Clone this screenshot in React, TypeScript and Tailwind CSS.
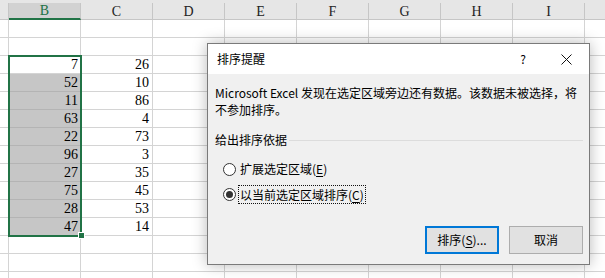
import React from "react";

const cols = ["B", "C", "D", "E", "F", "G", "H", "I"];

const colB = [null, null, 7, 52, 11, 63, 22, 96, 27, 75, 28, 47, null, null, null];
const colC = [null, null, 26, 10, 86, 4, 73, 3, 35, 45, 53, 14, null, null, null];

const cellFont = { fontFamily: '"Liberation Serif", serif' };
const uiFont = '"Noto Sans CJK SC", "Noto Sans", sans-serif';

function HeaderRow() {
  return (
    <div className="flex h-[20px] bg-[#e6e6e6]">
      <div className="w-[9px] shrink-0 border-r border-b border-[#c6c6c6] mt-[3px]" />
      {cols.map((c) => (
        <div
          key={c}
          className={
            c === "B"
              ? "w-[72px] shrink-0 mt-[3px] flex items-center justify-center bg-[#d2d2d2] border-r border-[#c6c6c6] border-b-2 border-b-[#217346] text-[#217346] text-[14px]"
              : "w-[72px] shrink-0 mt-[3px] flex items-center justify-center border-r border-b border-[#c6c6c6] text-[#222] text-[14px]"
          }
          style={cellFont}
        >
          {c}
        </div>
      ))}
      <div className="flex-1 mt-[3px] border-b border-[#c6c6c6]" />
    </div>
  );
}

function Row({ b, c, i }: { b: number | null; c: number | null; i: number }) {
  const shaded = i >= 3 && i <= 11;
  return (
    <div className="flex h-[18px]">
      <div className="w-[9px] shrink-0 border-r border-b border-[#d4d4d4]" />
      <div
        className={
          shaded
            ? "w-[72px] shrink-0 border-r border-b border-[#b4b4b4] bg-[#c6c6c6] flex items-center justify-end pr-[2px] text-[14px] leading-[18px]"
            : "w-[72px] shrink-0 border-r border-b border-[#d4d4d4] flex items-center justify-end pr-[2px] text-[14px] leading-[18px]"
        }
        style={cellFont}
      >
        {b}
      </div>
      <div
        className="w-[72px] shrink-0 border-r border-b border-[#d4d4d4] flex items-center justify-end pr-[3px] text-[14px] leading-[18px]"
        style={cellFont}
      >
        {c}
      </div>
      {cols.slice(2).map((k) => (
        <div key={k} className="w-[72px] shrink-0 border-r border-b border-[#d4d4d4]" />
      ))}
      <div className="flex-1 border-b border-[#d4d4d4]" />
    </div>
  );
}

function Radio({ checked }: { checked?: boolean }) {
  return (
    <span className="w-[13px] h-[13px] rounded-full border border-[#333] bg-white flex items-center justify-center shrink-0">
      {checked && <span className="w-[7px] h-[7px] rounded-full bg-[#333]" />}
    </span>
  );
}

function SortDialog() {
  return (
    <div
      className="absolute left-[207px] top-[43px] w-[383px] h-[222px] border border-[#7a7a7a] bg-[#f0f0f0] flex flex-col shadow-[0_0_14px_rgba(0,0,0,0.28)] text-[12px] text-black"
      style={{ fontFamily: uiFont }}
    >
      {/* title bar */}
      <div className="h-[30px] bg-white flex items-center pl-[9px] shrink-0">
        <span className="flex-1">排序提醒</span>
        <span className="w-[14px] text-center mr-[31px]">?</span>
        <svg width="11" height="11" viewBox="0 0 11 11" className="mr-[17px]">
          <path d="M0.5 0.5 L10.5 10.5 M10.5 0.5 L0.5 10.5" stroke="#111" strokeWidth="1" />
        </svg>
      </div>

      <div className="flex-1 flex flex-col pl-[7px] pr-[6px] pt-[10px]">
        <p className="leading-[17px]">
          Microsoft Excel 发现在选定区域旁边还有数据。该数据未被选择，将
          <br />
          不参加排序。
        </p>

        <div className="mt-[13px] flex items-center leading-[17px]">
          <span>给出排序依据</span>
          <span className="flex-1 h-px bg-[#dcdcdc] ml-[2px] mt-[1px]" />
        </div>

        <div className="mt-[11px] ml-[8px] flex flex-col gap-[5px]">
          <label className="h-[20px] flex items-center">
            <Radio />
            <span className="ml-[2px] px-[1px] border border-transparent">
              扩展选定区域(<span className="underline underline-offset-2">E</span>)
            </span>
          </label>
          <label className="h-[20px] flex items-center">
            <Radio checked />
            <span className="ml-[2px] px-[1px] border border-dotted border-[#111] leading-[17px]">
              以当前选定区域排序(<span className="underline underline-offset-2">C</span>)
            </span>
          </label>
        </div>

        <div className="mt-auto mb-[10px] flex justify-end gap-[10px]">
          <button className="w-[74px] h-[28px] border-2 border-[#0078d7] bg-[#e1e1e1] flex items-center justify-center">
            排序(<span className="underline underline-offset-2">S</span>)...
          </button>
          <button className="w-[74px] h-[28px] border border-[#adadad] bg-[#e1e1e1] flex items-center justify-center">
            取消
          </button>
        </div>
      </div>
    </div>
  );
}

export default function App() {
  return (
    <div className="relative w-[605px] h-[278px] overflow-hidden bg-white text-black">
      <HeaderRow />
      {colB.map((b, i) => (
        <Row key={i} b={b} c={colC[i]} i={i} />
      ))}

      {/* selection box on B3:B12 */}
      <div className="absolute left-[8px] top-[55px] w-[74px] h-[182px] border-2 border-[#217346] pointer-events-none" />
      <div className="absolute left-[78px] top-[232px] w-[7px] h-[7px] bg-[#217346] border border-white" />

      <SortDialog />
    </div>
  );
}
